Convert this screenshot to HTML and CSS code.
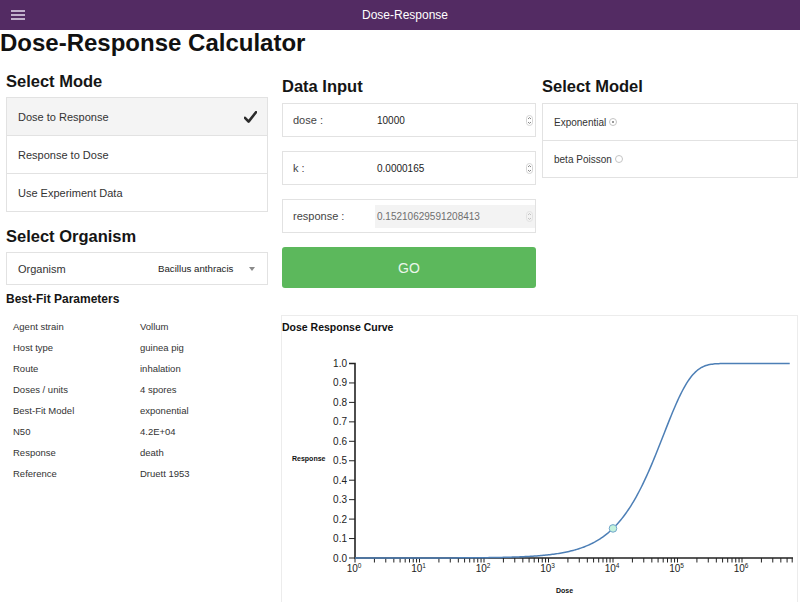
FILE: index.html
```html
<!DOCTYPE html>
<html lang="en">
<head>
<meta charset="utf-8">
<title>Dose-Response</title>
<link rel="stylesheet" href="styles.css">
</head>
<body>
<header class="topbar">
  <span class="menu-btn"><svg width="14" height="10" viewBox="0 0 14 10"><path d="M0 1H14M0 5H14M0 9H14" stroke="#e8def0" stroke-width="1.6" fill="none"/></svg></span>
  <span class="topbar-title">Dose-Response</span>
  <span></span>
</header>
<h1 class="page-title">Dose-Response Calculator</h1>
<main class="layout">
  <section class="col-left">
    <h2 class="section-title">Select Mode</h2>
    <ul class="list-box">
      <li class="list-item selected"><span>Dose to Response</span>
        <svg class="check" width="13" height="12" viewBox="0 0 13 12"><path d="M1 6.8L4.6 10.6L12 1.2" stroke="#2b2b2b" stroke-width="2.6" fill="none" stroke-linecap="round" stroke-linejoin="round"/></svg></li>
      <li class="list-item">Response to Dose</li>
      <li class="list-item">Use Experiment Data</li>
    </ul>
    <h2 class="section-title organism-title">Select Organism</h2>
    <div class="select-box">
      <span class="select-label">Organism</span>
      <span class="select-value">Bacillus anthracis</span>
      <span class="caret"></span>
    </div>
    <h3 class="params-title">Best-Fit Parameters</h3>
    <table class="params">
      <tr><td>Agent strain</td><td>Vollum</td></tr>
      <tr><td>Host type</td><td>guinea pig</td></tr>
      <tr><td>Route</td><td>inhalation</td></tr>
      <tr><td>Doses / units</td><td>4 spores</td></tr>
      <tr><td>Best-Fit Model</td><td>exponential</td></tr>
      <tr><td>N50</td><td>4.2E+04</td></tr>
      <tr><td>Response</td><td>death</td></tr>
      <tr><td>Reference</td><td>Druett 1953</td></tr>
    </table>
  </section>

  <section class="col-mid">
    <h2 class="section-title">Data Input</h2>
    <div class="field">
      <span class="field-label">dose :</span>
      <span class="field-input"><span>10000</span><svg class="spin" width="7" height="11" viewBox="0 0 7 11"><rect x="0.5" y="0.5" width="6" height="10" rx="3" fill="none" stroke="#d4d4d4"/><path d="M2 4L3.5 2.6L5 4M2 7L3.5 8.4L5 7" stroke="#777" stroke-width="0.9" fill="none"/></svg></span>
    </div>
    <div class="field">
      <span class="field-label">k :</span>
      <span class="field-input"><span>0.0000165</span><svg class="spin" width="7" height="11" viewBox="0 0 7 11"><rect x="0.5" y="0.5" width="6" height="10" rx="3" fill="none" stroke="#d4d4d4"/><path d="M2 4L3.5 2.6L5 4M2 7L3.5 8.4L5 7" stroke="#777" stroke-width="0.9" fill="none"/></svg></span>
    </div>
    <div class="field">
      <span class="field-label">response :</span>
      <span class="field-input disabled"><span>0.15210629591208413</span><svg class="spin" width="7" height="11" viewBox="0 0 7 11"><rect x="0.5" y="0.5" width="6" height="10" rx="3" fill="none" stroke="#e2e2e2"/><path d="M2 4L3.5 2.6L5 4M2 7L3.5 8.4L5 7" stroke="#bbb" stroke-width="0.9" fill="none"/></svg></span>
    </div>
    <button class="go-btn" type="button">GO</button>
  </section>

  <section class="col-right">
    <h2 class="section-title">Select Model</h2>
    <ul class="list-box">
      <li class="model-item">Exponential <span class="radio checked"></span></li>
      <li class="model-item">beta Poisson <span class="radio"></span></li>
    </ul>
  </section>

  <section class="chart-panel">
    <div class="chart-title">Dose Response Curve</div>
    <svg id="chart" class="chart" width="515" height="280" viewBox="282 334 515 280"></svg>
  </section>
</main>
<script src="script.js"></script>
</body>
</html>
```

FILE: styles.css
```css
* { box-sizing: border-box; }
html, body { margin: 0; padding: 0; background: #fff; }
body {
  font-family: "Liberation Sans", Arial, sans-serif;
  color: #222;
  width: 800px;
  overflow: hidden;
}

.topbar {
  height: 30px;
  background: #532b63;
  display: grid;
  grid-template-columns: 36px 1fr 26px;
  align-items: center;
}
.menu-btn { padding-left: 11px; display: flex; align-items: center; }
.topbar-title { text-align: center; color: #fff; font-size: 12px; }

.page-title {
  margin: 0;
  font-size: 24px;
  line-height: 26px;
  font-weight: bold;
  color: #111;
}

.layout {
  display: grid;
  grid-template-columns: 270px 254px 256px;
  grid-template-rows: auto auto;
  column-gap: 6px;
  row-gap: 27px;
  padding-left: 6px;
  align-items: start;
}

.col-left { grid-row: 1 / span 2; width: 262px; padding-top: 15px; }
.col-mid, .col-right { padding-top: 20px; }

.section-title {
  margin: 0;
  font-size: 16.5px;
  line-height: 20px;
  font-weight: bold;
  color: #151515;
}

.list-box {
  list-style: none;
  margin: 6px 0 0;
  padding: 0;
  border: 1px solid #e2e2e2;
}
.list-item {
  height: 38px;
  display: flex;
  align-items: center;
  justify-content: space-between;
  padding: 0 10px 0 11px;
  font-size: 11px;
  color: #333;
  border-bottom: 1px solid #e2e2e2;
}
.list-item:last-child { border-bottom: none; height: 37px; }
.list-item.selected { background: #f4f4f4; }
.check { display: block; }

.organism-title { margin-top: 14px; }

.select-box {
  margin-top: 6px;
  height: 33px;
  border: 1px solid #e2e2e2;
  display: flex;
  align-items: center;
  padding-left: 11px;
  font-size: 11px;
  color: #333;
}
.select-label { width: 140px; }
.select-value { font-size: 9.7px; color: #222; }
.caret {
  margin-left: auto;
  margin-right: 12px;
  width: 0; height: 0;
  border-left: 3.5px solid transparent;
  border-right: 3.5px solid transparent;
  border-top: 4px solid #8a8a8a;
}

.params-title {
  margin: 7px 0 0;
  font-size: 12px;
  line-height: 15px;
  font-weight: bold;
  color: #151515;
}
.params {
  margin-top: 9.5px;
  border-collapse: collapse;
  font-size: 9.5px;
  color: #333;
}
.params td { padding: 0; height: 20.9px; vertical-align: middle; }
.params td:first-child { width: 134px; padding-left: 7px; }

.field {
  height: 34px;
  margin-top: 14px;
  border: 1px solid #e2e2e2;
  display: flex;
  align-items: center;
  padding-left: 10px;
}
.section-title + .field { margin-top: 7px; }
.field-label { width: 82px; font-size: 11px; color: #444; }
.field-input {
  flex: 1;
  height: 23px;
  display: flex;
  align-items: center;
  justify-content: space-between;
  padding: 0 2px 0 2px;
  font-size: 10px;
  color: #1c1c1c;
}
.field-input.disabled { background: #f3f3f3; color: #6f6f6f; }
.spin { display: block; }

.go-btn {
  display: block;
  width: 100%;
  height: 41px;
  margin-top: 14px;
  border: none;
  border-radius: 3px;
  background: #5cb85c;
  color: #eaf6ea;
  font-family: "Liberation Sans", Arial, sans-serif;
  font-size: 14px;
  padding: 0;
}

.col-right .list-box { margin-top: 7px; }
.model-item {
  height: 37px;
  display: flex;
  align-items: center;
  padding-left: 11px;
  font-size: 10px;
  color: #333;
  border-bottom: 1px solid #e2e2e2;
}
.model-item:last-child { border-bottom: none; height: 36px; }
.radio {
  display: inline-block;
  width: 8px; height: 8px;
  margin-left: 3px;
  border: 1px solid #c4c4c4;
  border-radius: 50%;
  position: relative;
}
.radio.checked::after {
  content: "";
  position: absolute;
  left: 2px; top: 2px;
  width: 2px; height: 2px;
  border-radius: 50%;
  background: #777;
}

.chart-panel {
  grid-column: 2 / span 2;
  margin-left: -1px;
  border: 1px solid #ececec;
  border-bottom: none;
  height: 300px;
}
.chart-title {
  margin-top: 4px;
  font-size: 10.5px;
  line-height: 14px;
  font-weight: bold;
  color: #111;
}
.chart { display: block; font-family: "Liberation Sans", Arial, sans-serif; }
.chart .axis { stroke: #222; fill: none; }
.chart .tick { stroke: #222; stroke-width: 1; }
.chart .tick-label { font-size: 10px; fill: #222; }
.chart .axis-title { font-size: 7px; font-weight: bold; fill: #111; }
.chart .curve { stroke: #4d7fb6; stroke-width: 1.5; fill: none; }
.chart .point { fill: #c3f2dc; stroke: #72a6cc; stroke-width: 1; }
```

FILE: script.js
```js
(function () {
  var NS = 'http://www.w3.org/2000/svg';
  var svg = document.getElementById('chart');
  var X0 = 355, DEC = 64.5, Y0 = 558, YH = 194.5, XMAX = 793;
  var k = 0.0000165;
  function xs(L) { return X0 + DEC * L; }
  function ys(r) { return Y0 - YH * r; }
  function el(tag, attrs, parent, text) {
    var e = document.createElementNS(NS, tag);
    for (var a in attrs) e.setAttribute(a, attrs[a]);
    if (text != null) e.textContent = text;
    (parent || svg).appendChild(e);
    return e;
  }

  // y ticks and labels
  for (var i = 0; i <= 10; i++) {
    var y = ys(i / 10);
    el('line', { 'class': 'tick', x1: X0 - 6, x2: X0, y1: y, y2: y });
    el('text', { 'class': 'tick-label', x: X0 - 8, y: y + 3.5, 'text-anchor': 'end' }, null, (i / 10).toFixed(1));
  }
  // x ticks
  for (var d = 0; d <= 6; d++) {
    for (var m = 1; m <= 9; m++) {
      var L = d + Math.log10(m);
      var x = xs(L);
      if (x > XMAX + 0.5) break;
      el('line', { 'class': 'tick', x1: x, x2: x, y1: Y0, y2: Y0 + 4.5 });
    }
    var t = el('text', { 'class': 'tick-label', x: xs(d) - 1, y: 572, 'text-anchor': 'middle' }, null, '10');
    el('tspan', { dy: -4, 'font-size': 6.5 }, t, String(d));
  }
  // axes
  el('path', { 'class': 'axis', d: 'M' + (X0 - 6) + ' ' + ys(1) + 'H' + X0 + 'V' + Y0 + 'H' + XMAX, 'stroke-width': 1.6 });

  // curve
  var p = [];
  for (var L2 = 0; L2 <= 6.75 + 1e-9; L2 += 0.02) {
    var r = 1 - Math.exp(-k * Math.pow(10, L2));
    p.push((p.length ? 'L' : 'M') + xs(L2).toFixed(2) + ' ' + ys(r).toFixed(2));
  }
  el('path', { 'class': 'curve', d: p.join('') });

  // data point
  var r0 = 1 - Math.exp(-k * 10000);
  el('circle', { 'class': 'point', cx: xs(4), cy: ys(r0), r: 3.8 });

  // axis titles
  el('text', { 'class': 'axis-title', x: 292, y: 461 }, null, 'Response');
  el('text', { 'class': 'axis-title', x: 564.5, y: 593, 'text-anchor': 'middle' }, null, 'Dose');
})();
```
